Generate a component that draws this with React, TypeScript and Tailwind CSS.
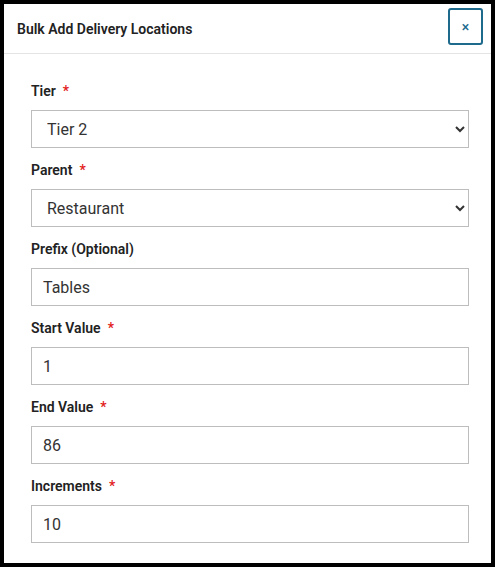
import React from 'react';

type FieldProps = {
  label: string;
  required?: boolean;
  children: React.ReactNode;
};

function Field({ label, required, children }: FieldProps) {
  return (
    <div className="mb-3">
      <label className="mb-[9px] flex h-5 items-center text-[14px] font-semibold text-[#222]">
        {label}
        {required && <span className="ml-[7px] text-[#e21c1c]">*</span>}
      </label>
      {children}
    </div>
  );
}

const boxClass =
  'block h-[38px] w-full border border-[#bdbdbd] bg-white px-[11px] text-[16px] text-[#333] outline-none';

export default function App() {
  return (
    <div
      className="h-[567px] w-[495px] bg-black p-1"
      style={{ fontFamily: 'Roboto, "Liberation Sans", sans-serif' }}
    >
      <div className="flex h-full flex-col bg-white">
        <div className="flex h-[50px] items-start justify-between border-b border-[#e4e4e4] pl-[13px] pr-2">
          <h2 className="mt-[15px] text-[14px] font-semibold leading-5 text-[#222]">
            Bulk Add Delivery Locations
          </h2>
          <button className="mt-1 flex h-[37px] w-[35px] items-center justify-center rounded-[3px] border-2 border-[#1d6a8d] text-[14px] font-medium leading-none text-[#1d6a8d]">
            ×
          </button>
        </div>
        <div className="pl-[27px] pr-[22px] pt-[27px]">
          <Field label="Tier" required>
            <select className={boxClass} defaultValue="Tier 2">
              <option>Tier 1</option>
              <option>Tier 2</option>
              <option>Tier 3</option>
            </select>
          </Field>
          <Field label="Parent" required>
            <select className={boxClass} defaultValue="Restaurant">
              <option>Restaurant</option>
              <option>Bar</option>
            </select>
          </Field>
          <Field label="Prefix (Optional)">
            <input className={boxClass} defaultValue="Tables" />
          </Field>
          <Field label="Start Value" required>
            <input className={boxClass} defaultValue="1" />
          </Field>
          <Field label="End Value" required>
            <input className={boxClass} defaultValue="86" />
          </Field>
          <Field label="Increments" required>
            <input className={boxClass} defaultValue="10" />
          </Field>
        </div>
      </div>
    </div>
  );
}
